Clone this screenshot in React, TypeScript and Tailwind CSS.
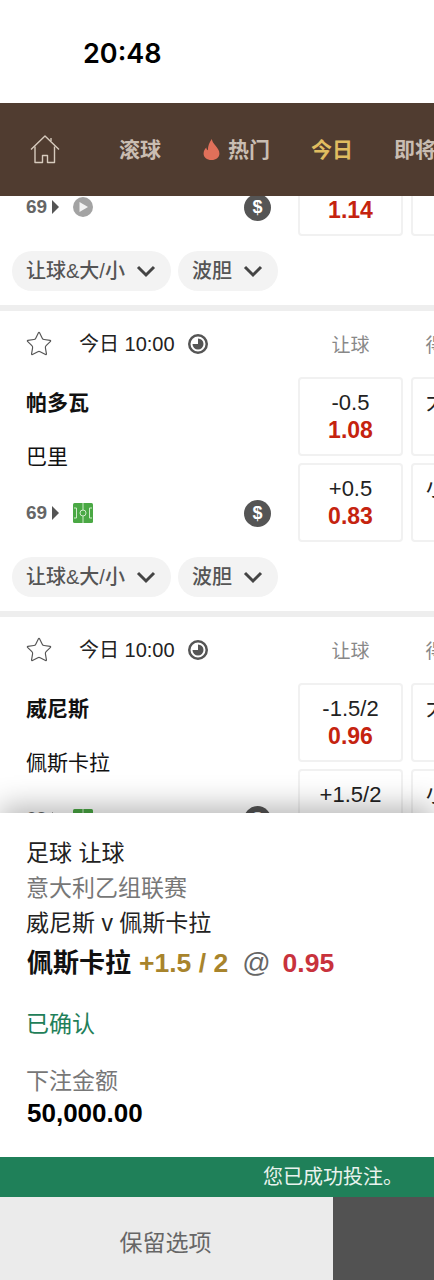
import { Star } from 'lucide-react';

type Match = {
  home: string;
  away: string;
  top: [string, string];
  bottom: [string, string];
  live: 'play' | 'pitch';
};

const MATCHES: Match[] = [
  { home: '帕多瓦', away: '巴里', top: ['-0.5', '1.14'], bottom: ['+0.5', '1.14'], live: 'play' },
  { home: '帕多瓦', away: '巴里', top: ['-0.5', '1.08'], bottom: ['+0.5', '0.83'], live: 'pitch' },
  { home: '威尼斯', away: '佩斯卡拉', top: ['-1.5/2', '0.96'], bottom: ['+1.5/2', '0.95'], live: 'pitch' },
];

function HomeIcon() {
  return (
    <svg width="30" height="29" viewBox="0 0 30 29" fill="none" stroke="#d6cabd" strokeWidth="1.4" strokeLinejoin="round" className="shrink-0">
      <path d="M1 14.5 15 1l14 13.5" />
      <path d="M5 11.5V27.5h7.5V20.5h5v7h7V11.5" />
      <path d="M21 6V3" />
    </svg>
  );
}

function Flame() {
  return (
    <svg width="17" height="21" viewBox="0 0 17 21" fill="#e0705a" className="shrink-0">
      <path d="M8.8 0c.5 3.2 2 4.6 4 7 1.8 2.2 3.600 4.400 3.600 7.400 0 3.900-3.300 6.600-7.900 6.600S.6 18.300.6 14.400c0-2.500 1.100-4.300 2.700-6 .1 1.300.6 2.200 1.600 2.800C4.700 7 6.500 3.300 8.800 0Z" />
    </svg>
  );
}

function ClockIcon() {
  return (
    <svg width="20" height="20" viewBox="0 0 20 20" className="shrink-0">
      <circle cx="10" cy="10" r="8.750" fill="none" stroke="#555" strokeWidth="2.500" />
      <path d="M10 4.500a5.500 5.500 0 1 1-5.500 5.500H10Z" fill="#555" />
    </svg>
  );
}

function PlayIcon() {
  return (
    <svg width="20" height="20" viewBox="0 0 20 20">
      <circle cx="10" cy="10" r="10" fill="#a3a3a3" />
      <path d="M6.500 5 15 10l-8.500 5Z" fill="#f2f2f2" />
    </svg>
  );
}

function PitchIcon() {
  return (
    <svg width="20" height="20" viewBox="0 0 20 20">
      <rect width="20" height="20" rx="1.500" fill="#4aa844" />
      <g fill="none" stroke="#cfeac9" strokeWidth="1">
        <path d="M10 0v7M10 13v7" />
        <circle cx="10" cy="10" r="3" />
        <path d="M1 5h2.500v10H1M19 5h-2.500v10H19" />
      </g>
    </svg>
  );
}

function Chevron() {
  return (
    <svg width="20" height="13" viewBox="0 0 20 13" fill="none" stroke="#444" strokeWidth="3" className="shrink-0">
      <path d="M2 2l8 8 8-8" />
    </svg>
  );
}

function OddsBox({ line, price }: { line: string; price: string }) {
  return (
    <div className="flex h-[79px] w-[105px] shrink-0 flex-col items-center justify-center rounded-[4px] border-2 border-[#f1f1f1] bg-white">
      <span className="text-[22px] leading-[27px] text-[#222]">{line}</span>
      <span className="text-[23px] font-bold leading-[29px] text-[#c5230f]">{price}</span>
    </div>
  );
}

function SideBox({ label }: { label: string }) {
  return (
    <div className="h-[79px] w-[105px] shrink-0 rounded-[4px] border-2 border-[#f1f1f1] bg-white pl-[13px] pt-[9px] text-[22px] leading-[27px] text-[#222]">
      {label}
    </div>
  );
}

function Pill({ label }: { label: string }) {
  return (
    <button type="button" className="flex h-10 shrink-0 items-center gap-[11px] rounded-full bg-[#f3f3f3] pl-[14px] pr-[15px] text-[20px] font-medium text-[#555]">
      <span className="whitespace-nowrap">{label}</span>
      <Chevron />
    </button>
  );
}

function MatchCard({ match }: { match: Match }) {
  return (
    <div className="h-[300px] w-[434px] shrink-0 overflow-hidden bg-white">
      <div className="flex h-[65px] items-center whitespace-nowrap">
        <div className="flex w-[298px] shrink-0 items-center pl-[26px]">
          <Star size={28} strokeWidth={1} className="-ml-px shrink-0 text-[#555]" />
          <span className="ml-[26px] text-[20px] text-[#222]">今日 10:00</span>
          <span className="ml-[13px]"><ClockIcon /></span>
        </div>
        <span className="mt-[5px] w-[105px] shrink-0 text-center text-[19px] text-[#888]">让球</span>
        <span className="ml-2 mt-[5px] w-[105px] shrink-0 text-center text-[19px] text-[#888]">得分大小</span>
      </div>
      <div className="flex h-[167px]">
        <div className="w-[298px] shrink-0 pl-[26px] pr-[27px]">
          <div className="flex h-[54px] items-center text-[21px] font-bold text-[#111]">{match.home}</div>
          <div className="flex h-[54px] items-center text-[21px] text-[#111]">{match.away}</div>
          <div className="flex h-[58px] items-center">
            <span className="text-[19px] font-bold text-[#666]">69</span>
            <span className="ml-[5px] h-0 w-0 border-y-[7px] border-l-[7px] border-y-transparent border-l-[#555]" />
            <span className="ml-[14px]">{match.live === 'play' ? <PlayIcon /> : <PitchIcon />}</span>
            <span className="ml-auto flex h-[27px] w-[27px] items-center justify-center rounded-full bg-[#555] text-[18px] font-bold text-white">$</span>
          </div>
        </div>
        <div className="flex shrink-0 flex-col gap-[7px] pt-px">
          <OddsBox line={match.top[0]} price={match.top[1]} />
          <OddsBox line={match.bottom[0]} price={match.bottom[1]} />
        </div>
        <div className="ml-2 flex shrink-0 flex-col gap-[7px] pt-px">
          <SideBox label="大" />
          <SideBox label="小" />
        </div>
      </div>
      <div className="mt-[14px] flex gap-[7px] pl-3">
        <Pill label="让球&大/小" />
        <Pill label="波胆" />
      </div>
    </div>
  );
}

export default function App() {
  return (
    <div className="flex h-[1280px] w-[434px] flex-col overflow-hidden bg-white font-['Liberation_Sans','Noto_Sans_CJK_SC',sans-serif]">
      <div className="flex h-[103px] shrink-0 items-center pl-[83px] pt-[6px] font-['Inter','Liberation_Sans',sans-serif] text-[27px] font-semibold text-black">
        20:48
      </div>

      <div className="z-10 flex h-[93px] shrink-0 items-center overflow-hidden whitespace-nowrap bg-[#503c30] pl-[30px] text-[21px] font-bold text-[#c9bdb2]">
        <HomeIcon />
        <span className="ml-[59px] shrink-0">滚球</span>
        <span className="ml-[42px] flex shrink-0 items-center gap-2">
          <Flame />
          热门
        </span>
        <span className="ml-[41px] shrink-0 text-[#e0bd60]">今日</span>
        <span className="ml-[41px] shrink-0">即将开赛</span>
      </div>

      <div className="h-[617px] shrink-0 overflow-hidden bg-[#eeeeee]">
        <div className="-mt-[191px] flex flex-col gap-[6px]">
          {MATCHES.map((m) => (
            <MatchCard key={m.away + m.top[1]} match={m} />
          ))}
        </div>
      </div>

      <div className="z-10 flex flex-1 flex-col bg-white shadow-[0_-6px_28px_rgba(0,0,0,0.3)]">
        <div className="h-[344px] px-[26px] pt-[23px] text-[23px] text-[#222]">
          <div className="leading-[35px]">足球 让球</div>
          <div className="leading-[35px] text-[#777]">意大利乙组联赛</div>
          <div className="leading-[35px]">威尼斯 v 佩斯卡拉</div>
          <div className="ml-px mt-[2px] flex items-center text-[26px] font-bold leading-[40px]">
            <span className="text-[#111]">佩斯卡拉</span>
            <span className="ml-2 text-[26.5px] text-[#a8842c]">+1.5 / 2</span>
            <span className="ml-[14px] text-[28px] font-normal text-[#666]">@</span>
            <span className="ml-[12px] text-[26.5px] text-[#c8323c]">0.95</span>
          </div>
          <div className="mt-[21px] leading-[40px] text-[#1f8059]">已确认</div>
          <div className="mt-[20px] leading-[34px] text-[#777]">下注金额</div>
          <div className="ml-px text-[26px] font-bold leading-[30px] text-black">50,000.00</div>
        </div>
        <div className="flex h-10 items-center justify-end bg-[#1f8059] pr-[31px] text-[20px] text-[#e9f3ee]">
          您已成功投注。
        </div>
        <div className="flex flex-1">
          <button type="button" className="w-[333px] bg-[#ebebeb] pr-[2px] pt-[10px] text-[23px] text-[#666]">
            保留选项
          </button>
          <div className="flex-1 bg-[#525252]" />
        </div>
      </div>
    </div>
  );
}
